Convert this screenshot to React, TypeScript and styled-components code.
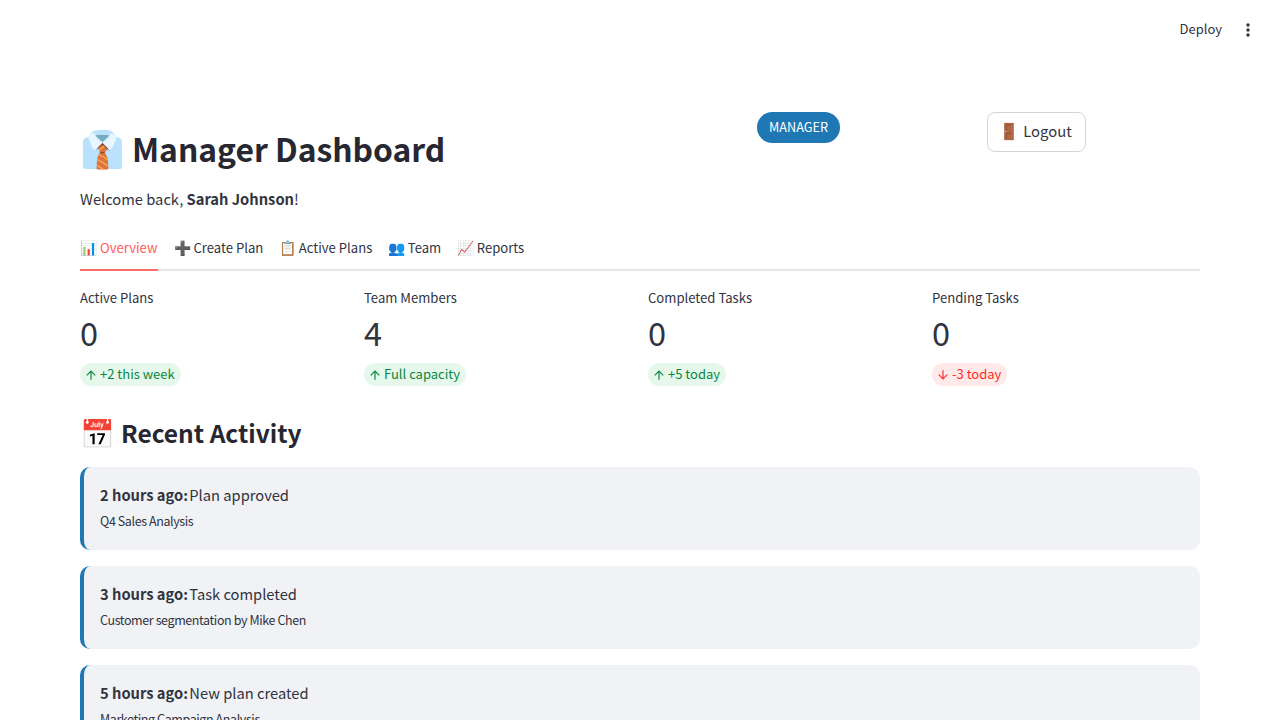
import React from "react";
import styled, { createGlobalStyle } from "styled-components";

const Global = createGlobalStyle`
  html, body { margin: 0; padding: 0; height: 720px; overflow: hidden; background: #fff; }
  body { font-family: "Noto Sans CJK SC", "Noto Sans", sans-serif; color: #31333f; }
`;

const Page = styled.div`
  width: 1280px; height: 720px; overflow: hidden; display: flex; flex-direction: column;
`;
const TopBar = styled.header`
  height: 60px; flex: none; display: flex; align-items: center; justify-content: flex-end;
  gap: 18px; padding-right: 24px;
`;
const Deploy = styled.span`font-size: 13px; line-height: 18px; color: #31333f; margin-top: -2px;`;
const Main = styled.main`padding: 52px 80px 0; display: flex; flex-direction: column;`;
const Emoji = styled.span<{ $size: number; $gap: number; $lift?: number }>`
  font-size: ${(p) => p.$size}px; margin-right: ${(p) => p.$gap}px; line-height: 1;
  margin-bottom: ${(p) => p.$lift ?? 0}px;
`;
const HeaderRow = styled.div`
  display: grid; grid-template-columns: 677px 230px 1fr; height: 75px;
`;
const Title = styled.h1`
  margin: 0; height: 71px;
  font-size: 31.8px; line-height: 50px; font-weight: 700; color: #262730;
  display: flex; align-items: center;
`;
const BadgeCell = styled.div`display: flex; align-items: flex-start;`;
const Badge = styled.span`
  background: #1f77b4; color: #fff; font-size: 12.7px; line-height: 30px; height: 31px;
  padding: 0 12px; border-radius: 16px;
`;
const LogoutBtn = styled.button`
  width: 99px; height: 40px; border: 1px solid #d3d4d8; border-radius: 8px; background: #fff;
  font: inherit; font-size: 14.8px; color: #31333f; padding: 0 2px 4px 0; display: flex; align-items: center; justify-content: center;
`;
const Welcome = styled.p`margin: 0; font-size: 14.7px; line-height: 24px; color: #31333f; height: 44px;
  b { font-weight: 700; }`;
const Tabs = styled.nav`
  display: flex; gap: 15.5px; height: 40px; box-sizing: border-box; border-bottom: 2px solid #e6e7ea;
`;
const Tab = styled.div<{ $active?: boolean }>`
  font-size: 13.1px; line-height: 36px; height: 40px; white-space: nowrap; box-sizing: border-box;
  display: flex; align-items: center; padding-bottom: 4px;
  min-width: ${(p) => (p.$active ? "78px" : "0")};
  color: ${(p) => (p.$active ? "#ff5a5a" : "#31333f")};
  border-bottom: 2px solid ${(p) => (p.$active ? "#ff6c6c" : "transparent")};
`;
const Metrics = styled.section`
  display: grid; grid-template-columns: repeat(4, 268px); gap: 16px; margin-top: 16px;
`;
const Metric = styled.div`display: flex; flex-direction: column; align-items: flex-start;`;
const MetricLabel = styled.div`font-size: 13.1px; line-height: 22px; color: #31333f;`;
const MetricValue = styled.div`font-size: 32.5px; line-height: 48px; font-weight: 400; color: #31333f; margin-top: -1px;`;
const Delta = styled.div<{ $down?: boolean }>`
  display: inline-flex; align-items: center; height: 23px; box-sizing: border-box; padding: 0 6px 2px 4px;
  border-radius: 12px; font-size: 13px; margin-top: 7px;
  background: ${(p) => (p.$down ? "#ffe9e9" : "#e6f7ec")};
  color: ${(p) => (p.$down ? "#ff2b2b" : "#09873f")};
  svg { margin: 2px 2px 0 0; }
`;
const H2 = styled.h2`
  margin: 27px 0 0; font-size: 24.5px; line-height: 40px; font-weight: 700; color: #262730; height: 54px;
  display: flex; align-items: flex-start;
`;
const H2Inner = styled.span`display: flex; align-items: center; height: 40px;`;
const Cards = styled.div`display: flex; flex-direction: column; gap: 16px;`;
const Card = styled.article`
  flex: none; height: 83px; box-sizing: border-box; background: #f0f2f6; border-left: 4px solid #1f77b4;
  border-radius: 10px; padding: 15px 16px 0;
`;
const CardTitle = styled.div`font-size: 14.7px; line-height: 25px; color: #31333f; b { font-weight: 700; margin-right: -2px; }`;
const CardSub = styled.div`font-size: 12.5px; letter-spacing: -0.4px; line-height: 20px; margin-top: 4px; color: #31333f;`;

const Arrow = ({ down }: { down?: boolean }) => (
  <svg width="14" height="14" viewBox="0 0 24 24" fill="currentColor" style={down ? { transform: "rotate(180deg)" } : undefined}>
    <path d="M4 12l1.41 1.41L11 7.83V20h2V7.83l5.58 5.59L20 12l-8-8-8 8z" />
  </svg>
);

const metrics = [
  { label: "Active Plans", value: "0", delta: "+2 this week" },
  { label: "Team Members", value: "4", delta: "Full capacity" },
  { label: "Completed Tasks", value: "0", delta: "+5 today" },
  { label: "Pending Tasks", value: "0", delta: "-3 today", down: true },
];
const activity = [
  { t: "2 hours ago", a: "Plan approved", s: "Q4 Sales Analysis" },
  { t: "3 hours ago", a: "Task completed", s: "Customer segmentation by Mike Chen" },
  { t: "5 hours ago", a: "New plan created", s: "Marketing Campaign Analysis" },
];
const tabs = [
  { e: "📊", t: "Overview", active: true },
  { e: "➕", t: "Create Plan" },
  { e: "📋", t: "Active Plans" },
  { e: "👥", t: "Team" },
  { e: "📈", t: "Reports" },
];

export default function App() {
  return (
    <Page>
      <Global />
      <TopBar>
        <Deploy>Deploy</Deploy>
        <svg width="16" height="16" viewBox="0 0 16 16" fill="#31333f">
          <circle cx="8" cy="3" r="1.7" /><circle cx="8" cy="8" r="1.7" /><circle cx="8" cy="13" r="1.7" />
        </svg>
      </TopBar>
      <Main>
        <HeaderRow>
          <Title><Emoji $size={36} $gap={7} $lift={4}>👔</Emoji>Manager Dashboard</Title>
          <BadgeCell><Badge>MANAGER</Badge></BadgeCell>
          <div><LogoutBtn><Emoji $size={16} $gap={4}>🚪</Emoji>Logout</LogoutBtn></div>
        </HeaderRow>
        <Welcome>Welcome back, <b>Sarah Johnson</b>!</Welcome>
        <Tabs>
          {tabs.map((t) => (
            <Tab key={t.t} $active={t.active}><Emoji $size={14} $gap={3} $lift={3}>{t.e}</Emoji>{t.t}</Tab>
          ))}
        </Tabs>
        <Metrics>
          {metrics.map((m) => (
            <Metric key={m.label}>
              <MetricLabel>{m.label}</MetricLabel>
              <MetricValue>{m.value}</MetricValue>
              <Delta $down={m.down}><Arrow down={m.down} />{m.delta}</Delta>
            </Metric>
          ))}
        </Metrics>
        <H2><H2Inner><Emoji $size={28} $gap={6} $lift={3}>📅</Emoji>Recent Activity</H2Inner></H2>
        <Cards>
          {activity.map((c) => (
            <Card key={c.t}>
              <CardTitle><b>{c.t}:</b> {c.a}</CardTitle>
              <CardSub>{c.s}</CardSub>
            </Card>
          ))}
        </Cards>
      </Main>
    </Page>
  );
}
